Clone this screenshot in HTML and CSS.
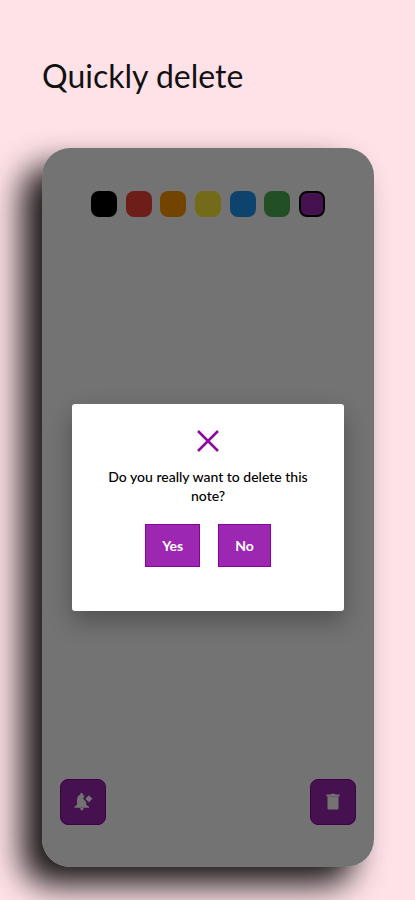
FILE: index.html
```
<!DOCTYPE html>
<html lang="en">
<head>
    <meta charset="UTF-8">
    <meta name="viewport" content="width=device-width, initial-scale=1.0">
    <title>Quickly delete</title>
    <link rel="stylesheet" href="styles.css">
</head>
<body>
    <h1>Quickly delete</h1>
    <main class="phone">
        <div class="colors">
            <input type="radio" name="color" class="swatch black" aria-label="Black">
            <input type="radio" name="color" class="swatch red" aria-label="Red">
            <input type="radio" name="color" class="swatch orange" aria-label="Orange">
            <input type="radio" name="color" class="swatch yellow" aria-label="Yellow">
            <input type="radio" name="color" class="swatch blue" aria-label="Blue">
            <input type="radio" name="color" class="swatch green" aria-label="Green">
            <input type="radio" name="color" class="swatch purple" aria-label="Purple" checked>
        </div>
        <div class="actions">
            <button type="button" class="action" aria-label="Add reminder">
                <svg width="20" height="20" viewBox="0 0 20 20" fill="currentColor">
                    <path d="M8.500 1c.9 0 1.300.6 1.300 1.300v.5c.7.2 1.300.5 1.800.9L10 6.500l3.200 3.500v2.800l2.800 2v1H1.500v-1l2.500-2V8c0-2.600 1.500-4.600 3.200-5.200v-.5C7.200 1.600 7.600 1 8.500 1z"/>
                    <path d="M7.300 16h3.200c0 1.500-.6 2.500-1.600 2.500s-1.600-1-1.600-2.500z"/>
                    <path d="M15.800 3.200l3.600 3.500-3.600 3.500-3.500-3.500z"/>
                </svg>
            </button>
            <button type="button" class="action" aria-label="Delete note">
                <svg width="20" height="20" viewBox="0 0 20 20" fill="currentColor">
                    <path d="M3.500 2.500h4l1-.7h3l1 .7h4v2h-13z"/>
                    <path d="M4.500 4.500h11v11.500c0 1-.6 1.500-1.600 1.500H6.100c-1 0-1.600-.5-1.600-1.500z"/>
                </svg>
            </button>
        </div>
        <div class="overlay">
            <div class="dialog" role="dialog" aria-labelledby="question">
                <svg class="cross" width="24" height="24" viewBox="0 0 24 24" fill="none" stroke="currentColor" stroke-width="2.500">
                    <path d="M2 2l20 20M22 2L2 22"/>
                </svg>
                <p id="question">Do you really want to delete this note?</p>
                <div class="buttons">
                    <button type="button" class="button">Yes</button>
                    <button type="button" class="button">No</button>
                </div>
            </div>
        </div>
    </main>
</body>
</html>
```
FILE: styles.css
```
* {
    box-sizing: border-box;
}
body {
    font-family: Lato, sans-serif;
    margin: 0;
    padding: 56px 41px 33px 42px;
    min-height: 100vh;
    display: flex;
    flex-direction: column;
    gap: 52px;
    background: #fee2e7;
    overflow-x: hidden;
}
h1 {
    margin: 0;
    font-size: 32px;
    line-height: 40px;
    font-weight: 400;
    color: #111;
}
.phone {
    position: relative;
    flex: 1;
    display: flex;
    flex-direction: column;
    justify-content: space-between;
    background: white;
    border-radius: 28px;
    box-shadow: -20px 18px 32px rgba(0, 0, 0, 0.9);
}
.colors {
    display: flex;
    justify-content: space-between;
    padding: 43px 49px;
}
.swatch {
    appearance: none;
    width: 26px;
    height: 26px;
    margin: 0;
    border-radius: 8px;
    cursor: pointer;
}
.swatch:checked {
    border: 2px solid black;
}
.black {
    background: black;
}
.red {
    background: #f44336;
}
.orange {
    background: #ff9800;
}
.yellow {
    background: #ffeb3b;
}
.blue {
    background: #2196f3;
}
.green {
    background: #4caf50;
}
.purple {
    background: #9c27b0;
}
.actions {
    display: flex;
    justify-content: space-between;
    padding: 0 18px 42px;
}
.action {
    display: flex;
    align-items: center;
    justify-content: center;
    width: 46px;
    height: 46px;
    padding: 0;
    background: #9c27b0;
    color: white;
    border: 1px solid #8a009c;
    border-radius: 8px;
    cursor: pointer;
}
.overlay {
    position: absolute;
    inset: 0;
    display: flex;
    align-items: center;
    justify-content: center;
    padding: 0 30px;
    background: rgba(0, 0, 0, 0.55);
    border-radius: 28px;
}
.dialog {
    width: 100%;
    padding: 25px 32px 44px;
    background: white;
    border-radius: 3px;
    box-shadow: 0 10px 24px rgba(0, 0, 0, 0.3);
    text-align: center;
}
.cross {
    display: block;
    margin: 0 auto 14px;
    color: #8e0a9f;
}
.dialog p {
    margin: 0 0 19px;
    font-size: 14px;
    line-height: 19px;
    font-weight: 500;
    color: black;
}
.buttons {
    display: flex;
    justify-content: center;
    gap: 18px;
}
.button {
    height: 43px;
    padding: 0 16px;
    background: #9c27b0;
    color: white;
    border: 1px solid #8a009c;
    font-family: inherit;
    font-size: 14px;
    font-weight: 700;
    cursor: pointer;
}
```
